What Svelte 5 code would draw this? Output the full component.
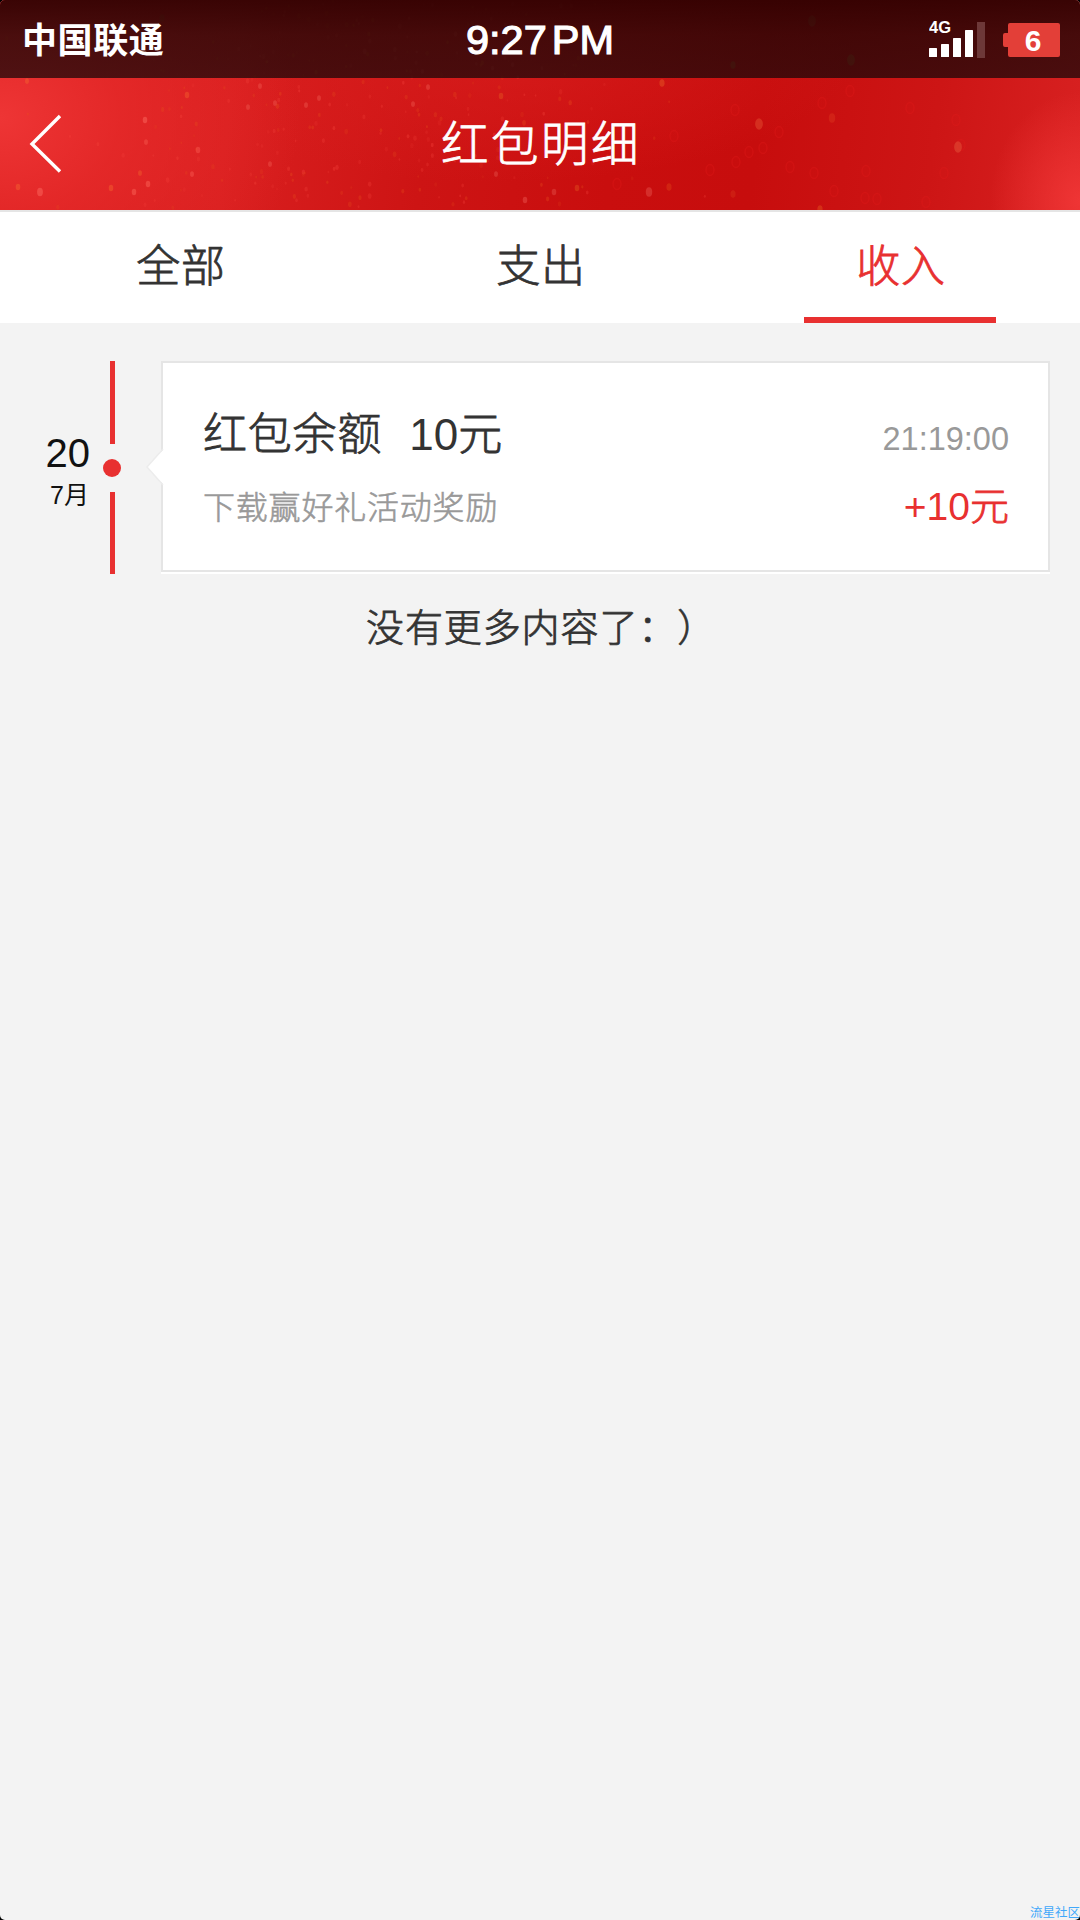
<script>
  const tabs = ['全部', '支出', '收入'];
  let active = $state(2);

  // Larger highlights: x, y, vertical radius, colour
  const sparks = [
    [40, 192, 4.5, '#ff7468'], [145, 120, 3.5, '#ff7468'], [146, 142, 3, '#f85d50'],
    [134, 192, 3.5, '#ff6d60'], [148, 184, 3.5, '#ff6d60'], [187, 95, 3.5, '#f5642e'],
    [111, 188, 3.5, '#f56a30'], [18, 187, 3.5, '#f56a30'], [27, 81, 3, '#f56a30'],
    [198, 150, 3.5, '#fa6055'], [192, 174, 3, '#fa6055'], [140, 173, 3, '#f0642e'],
    [270, 164, 3, '#ee5a52'], [306, 105, 3, '#ee5a52'], [275, 103, 3, '#ee5a52'],
    [260, 86, 3, '#ee5a52'], [248, 107, 3, '#ee5a52'], [319, 98, 3, '#ee5a52'],
    [413, 104, 3, '#ee5a52'], [428, 87, 3, '#ee5a52'], [501, 96, 3.5, '#e55a22'],
    [525, 200, 3.5, '#ee6058'], [496, 174, 3, '#e5564e'], [759, 124, 6, '#e75a38'],
    [649, 192, 5, '#e85a54'], [554, 192, 3.5, '#e5564e'], [577, 188, 3.5, '#e25620'],
    [662, 83, 4, '#ea6325'], [832, 118, 5, '#de3a1e'], [958, 147, 6, '#e86140'],
    [820, 209, 4, '#e45a20'], [669, 187, 4, '#dd4318'], [733, 194, 4, '#d7351a'],
    [812, 21, 6, '#b85a32'], [851, 60, 6, '#a86a2a'], [162, 18, 4, '#b8502a'],
    [733, 65, 4, '#a86a2a']
  ];
  const rings = [
    [822, 103], [779, 132], [850, 91], [790, 167], [814, 173], [866, 171], [834, 191],
    [865, 198], [877, 199], [736, 162], [735, 110], [910, 108], [956, 120], [926, 202],
    [674, 136], [763, 148], [749, 152], [617, 184], [944, 173], [961, 145], [710, 170]
  ];

  // Seeded generator keeps the fine speckle identical on every render
  let seed = 41;
  const rnd = () => (seed = (seed * 16807) % 2147483647) / 2147483647;
  const specks = Array.from({ length: 300 }, () => {
    const x = 370 + (rnd() + rnd() + rnd() - 1.5) * 260;
    return {
      x, y: rnd() * 208, r: 0.8 + rnd() * 1.1,
      c: rnd() > 0.45 ? '#f5453d' : '#e8501c', o: 0.12 + rnd() * 0.22
    };
  });
</script>

<div class="screen">
  <header>
    <svg class="texture" viewBox="0 0 1080 210" aria-hidden="true">
      <g>
        {#each specks as s}
          <ellipse cx={s.x} cy={s.y} rx={s.r} ry={s.r * 1.5} fill={s.c} opacity={s.o} />
        {/each}
        {#each rings as [x, y]}
          <ellipse cx={x} cy={y} rx="4" ry="5.5" fill="#e01717" fill-opacity=".25" stroke="#e81c1c" stroke-width="1.5" opacity=".28" />
        {/each}
        {#each sparks as [x, y, r, c]}
          <ellipse cx={x} cy={y} rx={r * 0.65} ry={r * 0.95} fill={c} opacity=".42" />
        {/each}
      </g>
    </svg>
    <div class="status">
      <span class="carrier">中国联通</span>
      <span class="clock">9:27<i></i>PM</span>
      <svg class="indicators" width="140" height="78" viewBox="0 0 140 78">
        <text class="net" x="0" y="31.5">4G</text>
        <g fill="#fff">
          <rect x="0" y="47" width="8" height="9" rx=".6" />
          <rect x="12" y="43" width="8" height="13" rx=".6" />
          <rect x="24" y="37" width="8" height="19" rx=".6" />
          <rect x="36" y="29" width="8" height="27" rx=".6" />
        </g>
        <rect x="48" y="21" width="8" height="36" fill="#6d3838" />
        <path d="M81 22h48a2 2 0 0 1 2 2v30a2 2 0 0 1-2 2H81a2 2 0 0 1-2-2v-8h-3a2 2 0 0 1-2-2V34a2 2 0 0 1 2-2h3v-8a2 2 0 0 1 2-2z" fill="#e33f38" />
        <text class="level" x="104" y="49.500" text-anchor="middle">6</text>
      </svg>
    </div>
    <div class="nav">
      <svg class="back" width="34" height="60" viewBox="0 0 34 60">
        <path d="M31 2L3 30L31 57.500" fill="none" stroke="#fff" stroke-width="3.400" />
      </svg>
      <h1>红包明细</h1>
    </div>
  </header>

  <nav class="tabs">
    {#each tabs as tab, i}
      <button class:active={active === i} onclick={() => (active = i)}><span>{tab}</span></button>
    {/each}
  </nav>

  <main>
    <section class="entry">
      <div class="date"><b>20</b><small>7月</small></div>
      <div class="line"><i class="bar"></i><i class="dot"></i><i class="bar low"></i></div>
      <article>
        <svg class="arrow" width="20" height="38" viewBox="0 0 20 38">
          <path d="M19 1L2 19L19 37z" fill="#fff" />
          <path d="M18 1L2 19L18 37" fill="none" stroke="#ececec" stroke-width="1.500" />
        </svg>
        <div class="row top">
          <h2>红包余额<em><span class="num">10</span>元</em></h2>
          <time>21:19:00</time>
        </div>
        <div class="row bottom">
          <p>下载赢好礼活动奖励</p>
          <strong><span class="num">+10</span>元</strong>
        </div>
      </article>
    </section>
    <p class="end">没有更多内容了：）</p>
  </main>
  <footer>流星社区</footer>
</div>

<style>
  :global(body) { margin: 0; background: #000; }
  .screen {
    width: 1080px; height: 1920px; display: flex; flex-direction: column;
    background: #f3f3f3; border-radius: 5px; overflow: hidden; color: #333;
    font-family: "Liberation Sans", "Noto Sans CJK SC", sans-serif;
  }
  h1, h2, p { margin: 0; font-weight: 400; }
  /* Light CJK face with a hairline stroke gives a weight between light and regular */
  h1, h2, button, .bottom p, strong, .end { -webkit-text-stroke: .8px currentColor; }
  .bottom p { -webkit-text-stroke-width: .6px; }
  .num { -webkit-text-stroke: 0; }
  header {
    position: relative; height: 210px; flex: none; color: #fff;
    background:
      radial-gradient(ellipse 90px 110px at 100% 96%, rgba(245, 58, 58, .8) 0%, transparent 100%),
      radial-gradient(ellipse 300px 240px at 0 56%, #ee3535 0%, rgba(232, 44, 44, .75) 40%, transparent 100%),
      radial-gradient(ellipse 360px 130px at 46% 25%, rgba(218, 30, 30, .7), transparent 100%),
      linear-gradient(97deg, #d31818 0%, #d91f1f 22%, #cd1414 40%, #c90e0e 57%, #c70d0d 70%, #cd1515 86%, #d82121 100%);
  }
  .texture { position: absolute; inset: 0; width: 1080px; height: 210px; }
  .status {
    position: relative; height: 78px; display: grid; grid-template-columns: 1fr auto 1fr;
    background: linear-gradient(rgba(35, 0, 0, .88), rgba(20, 4, 4, .74) 45%, rgba(22, 7, 8, .73));
    align-items: center;
  }
  .carrier { padding: 3px 0 0 22px; font-size: 35px; line-height: 76px; font-weight: 700; letter-spacing: .6px; }
  .clock { font-size: 41.500px; line-height: 78px; padding-top: 1px; -webkit-text-stroke: 1.2px #fff; }
  .clock i { display: inline-block; width: 5px; }
  .indicators { justify-self: end; margin-right: 11px; }
  .net { font: 700 16.500px "Liberation Sans", sans-serif; fill: #fff; }
  .level { font: 700 30px "Liberation Sans", sans-serif; fill: #fff; }
  .nav { position: relative; height: 132px; display: grid; grid-template-columns: 120px 1fr 120px; align-items: center; }
  .back { margin: 0 0 0 29px; }
  h1 { text-align: center; font-size: 47.500px; line-height: 130px; letter-spacing: 2.500px; font-weight: 300; padding: 2px 0 0 2px; }
  .tabs {
    height: 113px; flex: none; box-sizing: border-box; border-top: 2px solid #e5e5e5;
    background: #fff; display: grid; grid-template-columns: repeat(3, 1fr); justify-items: center;
  }
  button {
    width: 192px; height: 111px; padding: 0 0 2px 2px; border: 0; box-sizing: border-box; background: none;
    border-bottom: 6px solid transparent; color: #333; font: 300 44px/103px "Noto Sans CJK SC", sans-serif;
    letter-spacing: .8px;
  }
  button.active { color: #e83030; border-color: #e83030; }
  main { flex: 1; padding-top: 38px; }
  .entry { display: flex; height: 213px; }
  .date { width: 90px; color: #111; text-align: right; display: flex; flex-direction: column; padding-top: 68px; box-sizing: border-box; }
  .date b { font-weight: 400; font-size: 40px; line-height: 48px; }
  .date small { font-size: 25px; line-height: 37px; padding-right: 1px; }
  .line { width: 71px; display: flex; flex-direction: column; padding-left: 13px; box-sizing: border-box; }
  .bar { width: 5px; height: 83px; background: #e83030; margin-left: 7px; }
  .bar.low { height: 82px; }
  .dot { width: 18px; height: 18px; border-radius: 50%; background: #e83030; margin: 15px 0; }
  article {
    position: relative; width: 889px; height: 211px; box-sizing: border-box; background: #fff;
    border: 2px solid #e5e5e5; box-shadow: 0 2px #fff; padding: 34px 39px 0 40px;
  }
  .arrow { position: absolute; left: -18px; top: 85px; }
  .row { display: flex; justify-content: space-between; }
  .top { height: 76px; line-height: 76px; }
  h2 { font-size: 44px; letter-spacing: .8px; font-weight: 300; }
  em { font-style: normal; margin-left: 27px; letter-spacing: 0; }
  time { font-size: 32.500px; color: #999; padding-top: 4px; }
  .bottom { height: 66px; line-height: 66px; }
  .bottom p { font-size: 32px; letter-spacing: .8px; color: #999; font-weight: 300; padding-top: 2px; }
  strong { font-size: 39px; color: #e83030; font-weight: 300; padding-top: 1px; }
  .end { padding: 19px 0 0 366px; font-size: 38px; line-height: 70px; letter-spacing: .9px; font-weight: 300; text-spacing-trim: space-all; }
  footer { align-self: flex-end; font-size: 12.500px; line-height: 13px; color: #41a8fa; white-space: nowrap; }
</style>
